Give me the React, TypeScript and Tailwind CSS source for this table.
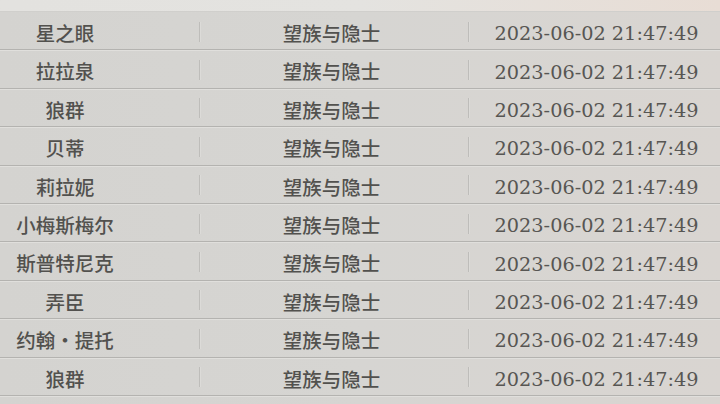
const rows = [
  "星之眼",
  "拉拉泉",
  "狼群",
  "贝蒂",
  "莉拉妮",
  "小梅斯梅尔",
  "斯普特尼克",
  "弄臣",
  "约翰·提托",
  "狼群",
];

function Divider() {
  return <div className="w-[2px] h-[20px] mt-[2px] bg-[#bebdba] border-r border-[#dcdbd8] shrink-0" />;
}

export default function App() {
  return (
    <div className="w-[720px] h-[404px] overflow-hidden bg-gradient-to-r from-[#d4d3d0] via-[#d6d5d2] to-[#d9d5d1] text-[#52514e]">
      {/* top strip */}
      <div className="h-[12px] bg-gradient-to-r from-[#e3e2df] via-[#e4e3e0] to-[#e8ddd5] border-b border-[#d0cfcc]" />
      {rows.map((name, i) => (
        <div
          key={i}
          className="flex items-center h-[38.4px] border-b border-[#b4b3b0] shadow-[0_1px_0_#e0dfdc]"
        >
          <div
            className="w-[199px] pr-[69px] pt-[4px] text-center text-[19.5px] font-medium"
            style={{ fontFamily: '"Noto Sans CJK SC", sans-serif' }}
          >
            {name}
          </div>
          <Divider />
          <div
            className="w-[267px] pt-[4px] text-center text-[19.5px] font-medium pr-[6px]"
            style={{ fontFamily: '"Noto Sans CJK SC", sans-serif' }}
          >
            望族与隐士
          </div>
          <Divider />
          <div
            className="flex-1 pt-[8px] text-center text-[19.3px] pl-[3px] text-[#575653]"
            style={{ fontFamily: '"DejaVu Serif", serif' }}
          >
            2023-06-02 21:47:49
          </div>
        </div>
      ))}
    </div>
  );
}
